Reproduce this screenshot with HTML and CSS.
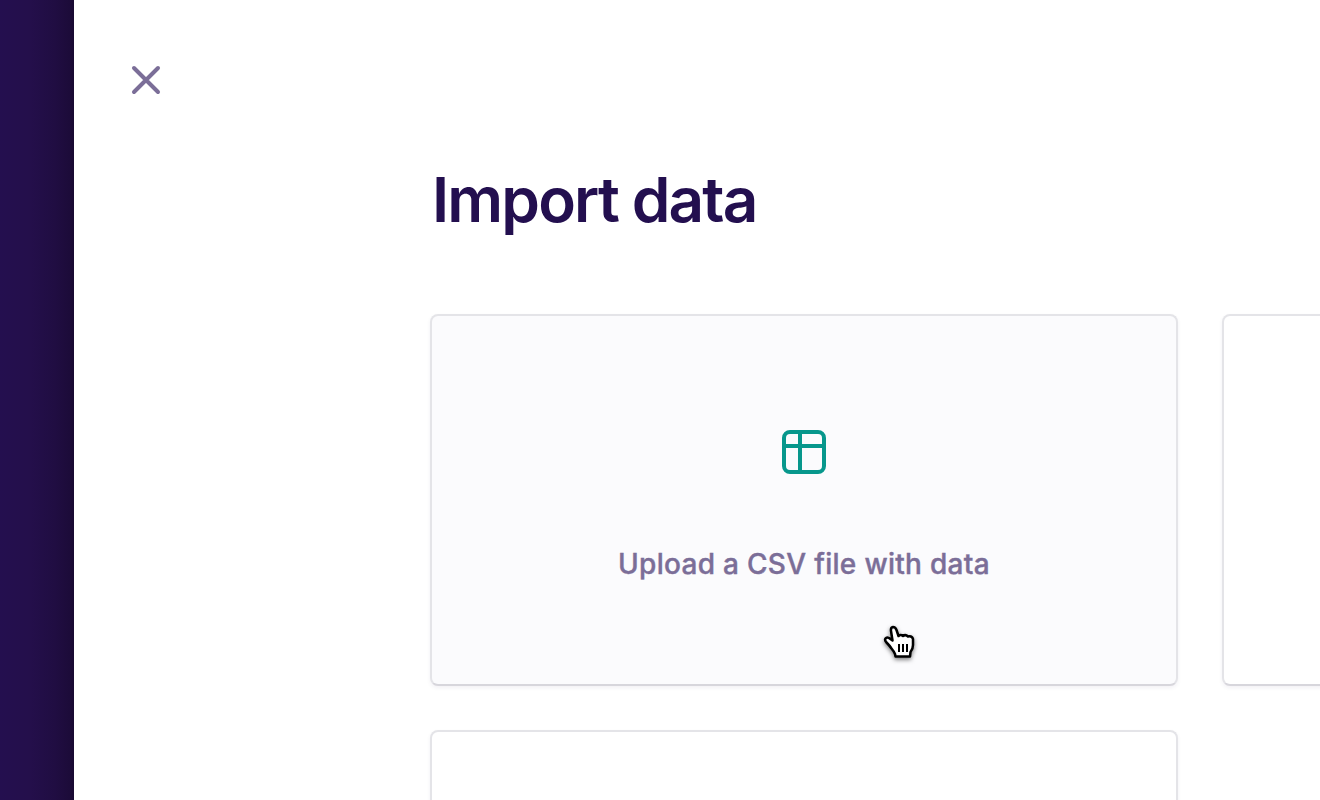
FILE: index.html
```html
<!DOCTYPE html>
<html lang="en">
<head>
<meta charset="utf-8">
<title>Import data</title>
<link rel="stylesheet" href="styles.css">
</head>
<body>
<div class="app">
  <aside class="backdrop"></aside>
  <main class="panel">
    <button class="close" aria-label="Close">
      <svg width="32" height="32" viewBox="0 0 32 32" fill="none" stroke="currentColor" stroke-width="4" stroke-linecap="round"><path d="M4 4 28 28M28 4 4 28"/></svg>
    </button>
    <section class="content">
      <h1 class="title">Import data</h1>
      <div class="grid">
        <div class="card card-active">
          <svg class="card-icon" width="48" height="48" viewBox="0 0 48 48" fill="none" stroke="currentColor" stroke-width="4"><rect x="4" y="4" width="40" height="40" rx="6"/><path d="M4 18H44M20 4V44"/></svg>
          <span class="card-label">Upload a CSV file with data</span>
        </div>
        <div class="card"></div>
        <div class="card"></div>
      </div>
    </section>
  </main>
</div>
<svg class="cursor" width="40" height="40" viewBox="0 0 40 40"><path d="M11.500 26.500C9.500 23.500 8 22 6.500 20.500C3.500 17.500 6 14.500 9 16L12.500 18.500L11 9Q10.500 5.500 13 5Q15.500 5 16.500 8L18.500 14Q20.500 12 23 14Q25.500 12 28 14.500Q32 13.500 33 17V23Q33 27 30.500 30L30 34.500H15.500L15 32Q14 29.500 11.500 26.500Z" fill="#fff" stroke="#000" stroke-width="2.500" stroke-linejoin="round"/><path d="M19 22v8M23 22v8M27 22v8" stroke="#000" stroke-width="2"/></svg>
</body>
</html>
```
FILE: styles.css
```css
* { box-sizing: border-box; }
body { margin: 0; overflow: hidden; background: #fff; font-family: Inter, sans-serif; }
.app { display: flex; height: 800px; width: 1320px; overflow: hidden; }
.backdrop { flex: 0 0 74px; background: linear-gradient(90deg, #240f4f 0, #240f4b 30px, #200d42 55px, #1c0b39 70px, #180931 74px); }
.panel { flex: 1; min-width: 0; background: #fff; }
.close { display: block; margin: 64px 0 0 56px; padding: 0; width: 32px; height: 32px; border: 0; background: none; color: #7b6e98; }
.content { padding: 64px 0 0 356px; }
.title { margin: 0; padding-left: 2px; height: 154px; line-height: 80px; font-size: 62px; font-weight: 600; letter-spacing: -1.85px; color: #230f4f; }
.grid { display: grid; grid-template-columns: 748px 748px; grid-auto-rows: 372px; gap: 44px; }
.card { display: flex; flex-direction: column; align-items: center; background: #fff; border: 2px solid #e4e4e8; border-bottom-color: #d7d6dc; border-radius: 8px; box-shadow: 0 2px 4px rgba(35, 15, 79, .06); }
.card-active { background: #fbfbfd; }
.card-icon { margin-top: 112px; color: #07978c; }
.card-label { margin-top: 68px; line-height: 40px; font-size: 28px; font-weight: 500; letter-spacing: .3px; -webkit-text-stroke: .4px currentColor; color: #7b6e98; white-space: nowrap; }
.cursor { position: absolute; left: 880px; top: 622px; filter: drop-shadow(0 2px 2px rgba(0, 0, 0, .5)); }
```
